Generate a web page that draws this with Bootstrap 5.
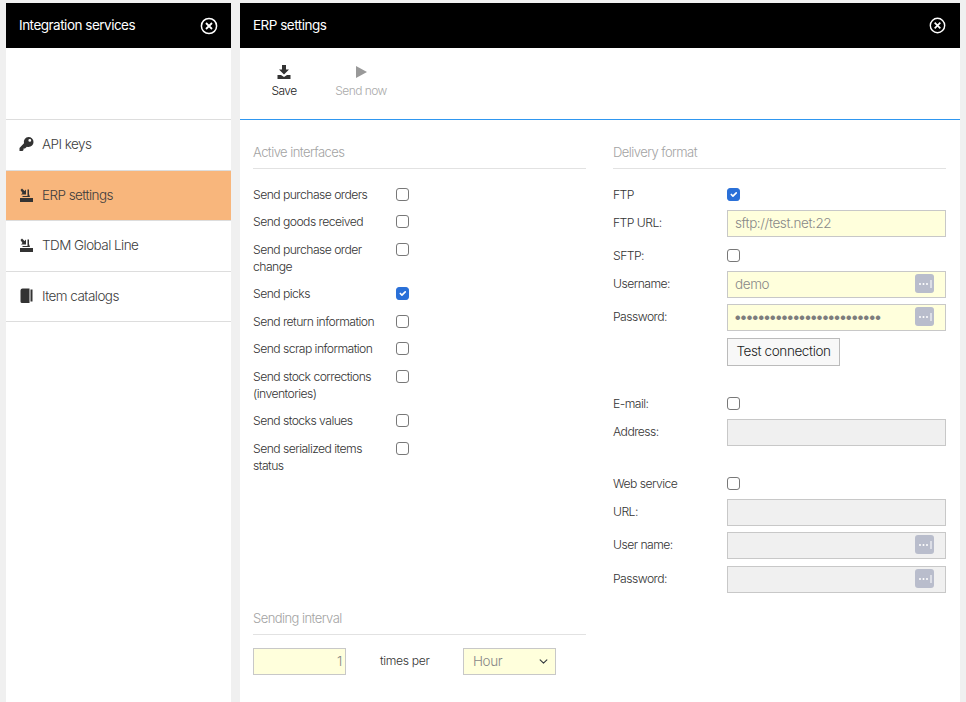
<!DOCTYPE html>
<html lang="en">
<head>
    <meta charset="UTF-8">
    <meta name="viewport" content="width=device-width, initial-scale=1.0">
    <title>ERP settings</title>
    <link href="https://cdn.jsdelivr.net/npm/bootstrap@5.3.0/dist/css/bootstrap.min.css" rel="stylesheet">
    <style>
        html, body { height: 100%; overflow: hidden; }
        body {
            background: #f0f0f0;
            font-family: Inter, "Liberation Sans", sans-serif;
            font-size: 12.2px;
            font-weight: 300;
            letter-spacing: -0.55px;
            color: #333;
        }

        .page-wrap { height: 702px; padding: 3px 6px 0; gap: 9px; }
        .side-panel { width: 225px; background: #fff; }
        .main-panel { width: 720px; background: #fff; }

        .panel-head {
            height: 45px;
            background: #000;
            color: #fff;
            font-size: 13.5px;
            font-weight: 400;
            letter-spacing: -0.5px;
            padding: 0 13px;
        }
        .main-panel .panel-head { padding-right: 14px; }

        .side-spacer { height: 72px; border-bottom: 1px solid #ddd; }
        .side-item {
            height: 50.5px;
            border-bottom: 1px solid #ddd;
            padding: 0 13px 1px;
            font-size: 13.5px;
            gap: 8px;
            color: #3c3c3c;
        }
        .side-item svg { flex: none; width: 15px; }
        .side-item.is-active { background: #f8b67c; }

        .tool-strip { height: 72px; border-bottom: 1px solid #2f97f0; padding: 17px 0 0 15px; gap: 19px; }
        .tool-btn { width: 58px; font-size: 12px; gap: 3px; color: #222; }
        .tool-btn.is-off { color: #aaa; }

        .form-body { padding: 0 14px 0 13px; gap: 27px; }
        .form-col { width: 333px; }
        .form-col.left-col { height: 555px; }

        .sect-title {
            margin-top: 24px;
            padding-bottom: 7px;
            height: 25px;
            border-bottom: 1px solid #e2e2e2;
            color: #a3a3a3;
            font-size: 13px;
            line-height: 17px;
        }
        .sect-title.lower { margin-top: 0; }
        .rows-top { margin-top: 12px; }
        .left-col .rows-top { margin-top: 11.7px; }

        .check-row { padding: 5px 0 5.5px; line-height: 17px; }
        .check-lbl { width: 143px; padding-right: 14px; }
        .box {
            width: 13px;
            height: 13px;
            margin: 2px 0 0;
            border: 1px solid #777;
            border-radius: 2px;
            box-shadow: none;
            flex: none;
        }
        .box:checked { background-color: #2a70d8; border-color: #2a70d8; }

        .field-row { line-height: 17px; }
        .check-row + .field-row { margin-top: 1px; }
        .check-row.section-b + .field-row { margin-top: 2px; }
        .field-row + .check-row { margin-top: 5.5px; }
        .field-row + .check-row.section-b { margin-top: 24px; }
        .gap-7 + .check-row.section-a { margin-top: 24.5px; }
        .field-lbl { width: 114px; flex: none; }
        .field-row .field-lbl { padding-bottom: 2px; }
        .fld {
            width: 219px;
            height: 27px;
            border: 1px solid #c8c8c8;
            background: #f0f0f0;
            font-size: 13.5px;
            color: #888;
            padding: 0 7px;
            letter-spacing: -0.4px;
            line-height: 25px;
        }
        .fld.is-yellow { background: #ffffdc; }
        .dots-btn {
            width: 19px;
            height: 19px;
            border-radius: 3px;
            background: #b9bdcc;
            top: 2px;
            right: 11px;
        }
        .dots-btn svg { display: block; }
        .pass-dots { color: #7d7d7d; font-size: 6px; letter-spacing: 0.36px; }
        .test-btn {
            margin-left: 114px;
            width: 113px;
            height: 28px;
            border: 1px solid #bbb;
            border-radius: 0;
            background: #f8f8f8;
            color: #222;
            font-size: 13.5px;
            font-weight: 300;
            padding: 0;
            letter-spacing: -0.4px;
        }
        .gap-7 { margin-top: 7px; }
        .gap-6 { margin-top: 6px; }

        .interval-row { margin-top: 13px; }
        .num-fld { width: 93px; text-align: right; padding-right: 3px; }
        .per-lbl { width: 117px; padding-left: 34px; letter-spacing: -0.35px; }
        .sel-fld {
            width: 93px;
            height: 27px;
            border: 1px solid #c8c8c8;
            border-radius: 0;
            background-color: #ffffdc;
            background-position: right 6px center;
            background-size: 11px 9px;
            font-size: 13.5px;
            font-weight: 300;
            color: #888;
            padding: 0 0 0 9px;
            letter-spacing: -0.4px;
        }
    </style>
</head>

<body>
    <div class="page-wrap d-flex">
        <div class="side-panel">
            <div class="panel-head d-flex align-items-center justify-content-between">
                <span>Integration services</span>
                <svg width="18" height="18" viewBox="0 0 18 18" fill="none" stroke="#fff">
                    <circle cx="9" cy="9" r="7.6" stroke-width="1.5"/>
                    <path d="M6 6l6 6M12 6l-6 6" stroke-width="1.8"/>
                </svg>
            </div>
            <div class="side-spacer"></div>
            <div class="side-item d-flex align-items-center">
                <svg width="15" height="14" viewBox="0 0 15 14" fill="#333">
                    <path d="M9.5 0a5 5 0 0 1 0 10 5 5 0 0 1-1.6-.3L6 11.5H4.500V13L3.500 14H.5V11L5 6.300A5 5 0 0 1 9.500 0zm1.300 2a1.400 1.400 0 1 0 0 2.800 1.400 1.400 0 0 0 0-2.800z"/>
                </svg>
                <span>API keys</span>
            </div>
            <div class="side-item is-active d-flex align-items-center">
                <svg width="14" height="14" viewBox="0 0 14 14" fill="#333">
                    <path d="M1 2l1.500-1.500 2.500 2.500L6.500 1.500V6.500H1.500L3 5zM8 1.500H9.500V6L10.500 9H3V8H8zM.5 10h13v4H.5z"/>
                </svg>
                <span>ERP settings</span>
            </div>
            <div class="side-item d-flex align-items-center">
                <svg width="14" height="14" viewBox="0 0 14 14" fill="#333">
                    <path d="M1 2l1.500-1.500 2.500 2.500L6.500 1.500V6.500H1.500L3 5zM8 1.500H9.500V6L10.500 9H3V8H8zM.5 10h13v4H.5z"/>
                </svg>
                <span>TDM Global Line</span>
            </div>
            <div class="side-item d-flex align-items-center">
                <svg width="14" height="15" viewBox="0 0 14 15" fill="#333">
                    <path d="M1 2.500Q1 .5 3 .5H10V15H2.500Q1 15 1 13.500zM11 1.500H13V13.500H11z"/>
                </svg>
                <span>Item catalogs</span>
            </div>
        </div>

        <div class="main-panel">
            <div class="panel-head d-flex align-items-center justify-content-between">
                <span>ERP settings</span>
                <svg width="17" height="17" viewBox="0 0 18 18" fill="none" stroke="#fff">
                    <circle cx="9" cy="9" r="7.6" stroke-width="1.5"/>
                    <path d="M6 6l6 6M12 6l-6 6" stroke-width="1.8"/>
                </svg>
            </div>

            <div class="tool-strip d-flex">
                <div class="tool-btn d-flex flex-column align-items-center">
                    <svg width="14" height="14" viewBox="0 0 14 14" fill="#333">
                        <path d="M5 0h4v4.500h3L7 9.500 2 4.500h3zM.5 10h3.500l3 2 3-2h3.500v4H.5z"/>
                    </svg>
                    <span>Save</span>
                </div>
                <div class="tool-btn is-off d-flex flex-column align-items-center">
                    <svg width="14" height="14" viewBox="0 0 14 14" fill="#999">
                        <path d="M2 1l11 6-11 6z"/>
                    </svg>
                    <span>Send now</span>
                </div>
            </div>

            <div class="form-body d-flex">
                <div class="form-col left-col d-flex flex-column">
                    <div class="sect-title">Active interfaces</div>
                    <div class="rows-top">
                        <div class="check-row d-flex"><div class="check-lbl">Send purchase orders</div><input class="form-check-input box" type="checkbox"></div>
                        <div class="check-row d-flex"><div class="check-lbl">Send goods received</div><input class="form-check-input box" type="checkbox"></div>
                        <div class="check-row d-flex"><div class="check-lbl">Send purchase order change</div><input class="form-check-input box" type="checkbox"></div>
                        <div class="check-row d-flex"><div class="check-lbl">Send picks</div><input class="form-check-input box" type="checkbox" checked></div>
                        <div class="check-row d-flex"><div class="check-lbl">Send return information</div><input class="form-check-input box" type="checkbox"></div>
                        <div class="check-row d-flex"><div class="check-lbl">Send scrap information</div><input class="form-check-input box" type="checkbox"></div>
                        <div class="check-row d-flex"><div class="check-lbl">Send stock corrections (inventories)</div><input class="form-check-input box" type="checkbox"></div>
                        <div class="check-row d-flex"><div class="check-lbl">Send stocks values</div><input class="form-check-input box" type="checkbox"></div>
                        <div class="check-row d-flex"><div class="check-lbl">Send serialized items status</div><input class="form-check-input box" type="checkbox"></div>
                    </div>
                    <div class="sect-title lower mt-auto">Sending interval</div>
                    <div class="interval-row d-flex align-items-center">
                        <div class="fld is-yellow num-fld">1</div>
                        <div class="per-lbl">times per</div>
                        <select class="form-select sel-fld"><option>Hour</option></select>
                    </div>
                </div>

                <div class="form-col d-flex flex-column">
                    <div class="sect-title">Delivery format</div>
                    <div class="check-row rows-top d-flex"><div class="field-lbl">FTP</div><input class="form-check-input box" type="checkbox" checked></div>
                    <div class="field-row d-flex align-items-center">
                        <div class="field-lbl">FTP URL:</div>
                        <div class="fld is-yellow">sftp://test.net:22</div>
                    </div>
                    <div class="check-row d-flex"><div class="field-lbl">SFTP:</div><input class="form-check-input box" type="checkbox"></div>
                    <div class="field-row d-flex align-items-center">
                        <div class="field-lbl">Username:</div>
                        <div class="fld is-yellow position-relative">demo<span class="dots-btn position-absolute"><svg width="19" height="19" viewBox="0 0 19 19" fill="#fff"><circle cx="5" cy="10" r="1"/><circle cx="8.500" cy="10" r="1"/><circle cx="12" cy="10" r="1"/><rect x="15.500" y="6" width="1" height="8"/></svg></span></div>
                    </div>
                    <div class="field-row d-flex align-items-center gap-6">
                        <div class="field-lbl">Password:</div>
                        <div class="fld is-yellow pass-dots position-relative">●●●●●●●●●●●●●●●●●●●●●●●●●<span class="dots-btn position-absolute"><svg width="19" height="19" viewBox="0 0 19 19" fill="#fff"><circle cx="5" cy="10" r="1"/><circle cx="8.500" cy="10" r="1"/><circle cx="12" cy="10" r="1"/><rect x="15.500" y="6" width="1" height="8"/></svg></span></div>
                    </div>
                    <div class="gap-7"><button class="btn test-btn" type="button">Test connection</button></div>

                    <div class="check-row d-flex section-a"><div class="field-lbl">E-mail:</div><input class="form-check-input box" type="checkbox"></div>
                    <div class="field-row d-flex align-items-center">
                        <div class="field-lbl">Address:</div>
                        <div class="fld"></div>
                    </div>

                    <div class="check-row d-flex section-b"><div class="field-lbl">Web service</div><input class="form-check-input box" type="checkbox"></div>
                    <div class="field-row d-flex align-items-center">
                        <div class="field-lbl">URL:</div>
                        <div class="fld"></div>
                    </div>
                    <div class="field-row d-flex align-items-center gap-6">
                        <div class="field-lbl">User name:</div>
                        <div class="fld position-relative"><span class="dots-btn position-absolute"><svg width="19" height="19" viewBox="0 0 19 19" fill="#fff"><circle cx="5" cy="10" r="1"/><circle cx="8.500" cy="10" r="1"/><circle cx="12" cy="10" r="1"/><rect x="15.500" y="6" width="1" height="8"/></svg></span></div>
                    </div>
                    <div class="field-row d-flex align-items-center gap-7">
                        <div class="field-lbl">Password:</div>
                        <div class="fld position-relative"><span class="dots-btn position-absolute"><svg width="19" height="19" viewBox="0 0 19 19" fill="#fff"><circle cx="5" cy="10" r="1"/><circle cx="8.500" cy="10" r="1"/><circle cx="12" cy="10" r="1"/><rect x="15.500" y="6" width="1" height="8"/></svg></span></div>
                    </div>
                </div>
            </div>
        </div>
    </div>
    <script src="https://cdn.jsdelivr.net/npm/bootstrap@5.3.0/dist/js/bootstrap.bundle.min.js"></script>
</body>
</html>
